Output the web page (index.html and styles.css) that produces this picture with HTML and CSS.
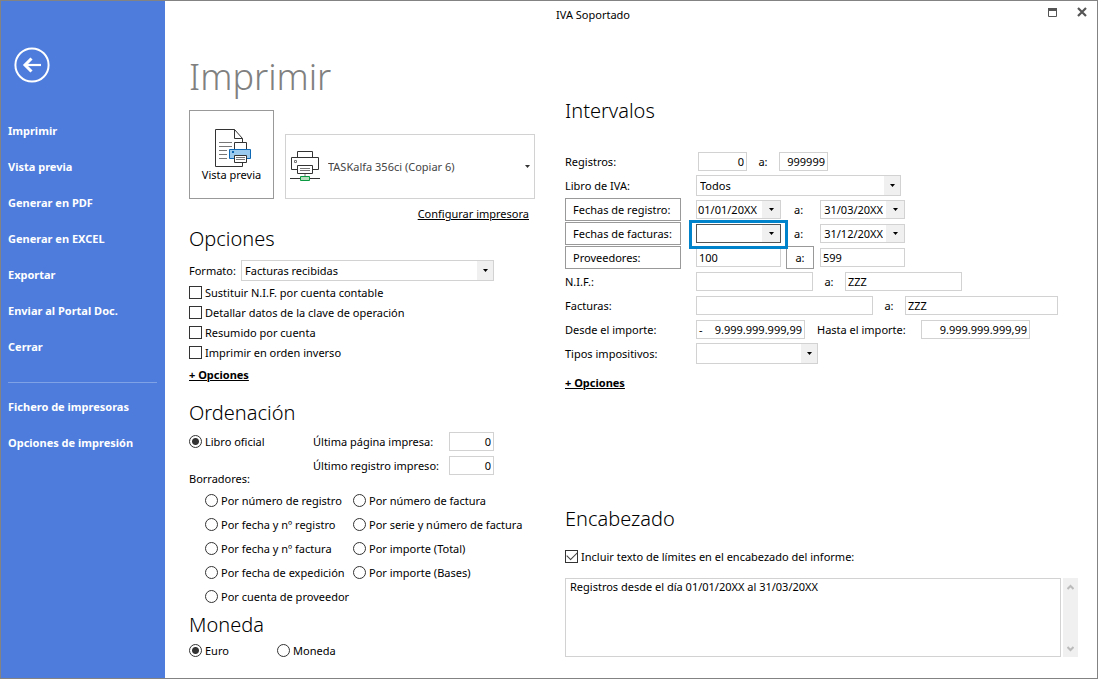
FILE: index.html
```html
<!DOCTYPE html>
<html lang="es">
<head>
<meta charset="utf-8">
<title>IVA Soportado</title>
<link rel="stylesheet" href="styles.css">
</head>
<body>
<div class="window">
  <nav class="sidebar">
    <button class="back" type="button" aria-label="Volver">
      <svg width="36" height="36" viewBox="0 0 36 36" fill="none" stroke="#fff"><circle cx="18" cy="18" r="16.6" stroke-width="2"/><path d="M27 18H11" stroke-width="2.2"/><path d="M17.5 11.5 11 18l6.500 6.500" stroke-width="3"/></svg>
    </button>
    <ul class="menu">
      <li><a href="#">Imprimir</a></li>
      <li><a href="#">Vista previa</a></li>
      <li><a href="#">Generar en PDF</a></li>
      <li><a href="#">Generar en EXCEL</a></li>
      <li><a href="#">Exportar</a></li>
      <li><a href="#">Enviar al Portal Doc.</a></li>
      <li><a href="#">Cerrar</a></li>
    </ul>
    <ul class="menu menu-extra">
      <li><a href="#">Fichero de impresoras</a></li>
      <li><a href="#">Opciones de impresión</a></li>
    </ul>
  </nav>

  <main class="main">
    <header class="titlebar">
      <span class="title">IVA Soportado</span>
      <div class="window-buttons">
        <button type="button" aria-label="Maximizar"><svg width="9" height="9" viewBox="0 0 9 9"><path d="M.5.5h8v8h-8z" fill="none" stroke="#555"/><path d="M0 0h9v3H0z" fill="#555"/></svg></button>
        <button type="button" aria-label="Cerrar"><svg width="10" height="10" viewBox="0 0 10 10"><path d="M1 1l8 8M9 1L1 9" stroke="#555" stroke-width="2.200"/></svg></button>
      </div>
    </header>

    <form class="columns">
      <div class="left">
        <h1>Imprimir</h1>
        <div class="printer-row">
          <button class="tile" type="button">
            <svg width="36" height="38" viewBox="0 0 36 38" fill="none">
              <path d="M.5.5h19l8 9v28H.500z" fill="#fff" stroke="#333"/><path d="M19.500.500v9h8" stroke="#333"/>
              <path d="M4 13.500h13M4 17.500h13M4 21.500h8M4 25.500h8M4 29.500h8" stroke="#777"/>
              <path d="M19.500 13.500h12v8h-12z" fill="#fff" stroke="#333"/>
              <path d="M14.500 20.500h21v9h-21z" fill="#9ccbf0" stroke="#0f68b4"/>
              <path d="M17 22h2v2h-2z" fill="#0f68b4"/>
              <path d="M19.500 26.500h12v7h-12z" fill="#fff" stroke="#333"/><path d="M21 28.500h9M21 30.500h9" stroke="#777"/>
            </svg>
            <span>Vista previa</span>
          </button>
          <div class="printer">
            <svg class="printer-icon" width="30" height="31" viewBox="0 0 30 31" fill="none">
              <path d="M7.500 6V.5h15V6M7.500 18.500h-6v-12h27v12h-6" stroke="#333"/>
              <path d="M4.500 9.500h2v2h-2z" stroke="#777"/>
              <path d="M7.500 14.500h15v8h-15z" stroke="#333"/><path d="M10 17.500h10M10 19.500h10" stroke="#777"/>
              <path d="M15 23v2" stroke="#777"/><path d="M0 27.500h30" stroke="#333"/>
              <path d="M10.500 25.500h9v4h-9z" fill="#b6dfbd" stroke="#0b9a41"/>
            </svg>
            <select class="printer-select" aria-label="Impresora"><option>TASKalfa 356ci (Copiar 6)</option></select>
            <svg class="printer-arrow" width="5" height="3" viewBox="0 0 5 3"><path d="M0 0h5L2.500 3z" fill="#333"/></svg>
          </div>
        </div>
        <p class="configure"><a href="#">Configurar impresora</a></p>

        <h2>Opciones</h2>
        <div class="format">
          <label for="formato">Formato:</label>
          <div class="select">
            <select id="formato"><option>Facturas recibidas</option></select>
            <span class="arrow"><svg width="5" height="3" viewBox="0 0 5 3"><path d="M0 0h5L2.500 3z"/></svg></span>
          </div>
        </div>
        <div class="checks">
          <label class="choice"><input type="checkbox">Sustituir N.I.F. por cuenta contable</label>
          <label class="choice"><input type="checkbox">Detallar datos de la clave de operación</label>
          <label class="choice"><input type="checkbox">Resumido por cuenta</label>
          <label class="choice"><input type="checkbox">Imprimir en orden inverso</label>
        </div>
        <a class="more" href="#">+ Opciones</a>

        <h2 class="order-title">Ordenación</h2>
        <div class="order-top">
          <div class="official">
            <label class="choice"><input type="radio" name="orden" checked>Libro oficial</label>
            <p>Borradores:</p>
          </div>
          <div class="counters">
            <label for="pagina">Última página impresa:</label><input class="box num" id="pagina" value="0">
            <label for="registro">Último registro impreso:</label><input class="box num" id="registro" value="0">
          </div>
        </div>
        <div class="drafts">
          <label class="choice"><input type="radio" name="orden">Por número de registro</label>
          <label class="choice"><input type="radio" name="orden">Por número de factura</label>
          <label class="choice"><input type="radio" name="orden">Por fecha y nº registro</label>
          <label class="choice"><input type="radio" name="orden">Por serie y número de factura</label>
          <label class="choice"><input type="radio" name="orden">Por fecha y nº factura</label>
          <label class="choice"><input type="radio" name="orden">Por importe (Total)</label>
          <label class="choice"><input type="radio" name="orden">Por fecha de expedición</label>
          <label class="choice"><input type="radio" name="orden">Por importe (Bases)</label>
          <label class="choice"><input type="radio" name="orden">Por cuenta de proveedor</label>
        </div>

        <h2 class="currency-title">Moneda</h2>
        <div class="currency">
          <label class="choice"><input type="radio" name="moneda" checked>Euro</label>
          <label class="choice"><input type="radio" name="moneda">Moneda</label>
        </div>
      </div>

      <div class="right">
        <h2>Intervalos</h2>
        <div class="ranges">
          <div class="row">
            <label for="reg1">Registros:</label>
            <div class="fields inset"><input class="box w-count num" id="reg1" value="0"><label class="sep" for="reg2">a:</label><input class="box w-count num" id="reg2" value="999999"></div>
          </div>
          <div class="row">
            <label for="libro">Libro de IVA:</label>
            <div class="fields"><div class="select w-book">
              <select id="libro"><option>Todos</option></select>
              <span class="arrow"><svg width="5" height="3" viewBox="0 0 5 3"><path d="M0 0h5L2.500 3z"/></svg></span>
            </div></div>
          </div>
          <div class="row">
            <button class="range-button" type="button">Fechas de registro:</button>
            <div class="fields">
              <div class="date"><input aria-label="Fecha de registro inicial" value="01/01/20XX"><button class="arrow" type="button" aria-label="Abrir calendario"><svg width="5" height="3" viewBox="0 0 5 3"><path d="M0 0h5L2.500 3z"/></svg></button></div>
              <label class="sep wide" for="fr2">a:</label>
              <div class="date end"><input id="fr2" value="31/03/20XX"><button class="arrow" type="button" aria-label="Abrir calendario"><svg width="5" height="3" viewBox="0 0 5 3"><path d="M0 0h5L2.500 3z"/></svg></button></div>
            </div>
          </div>
          <div class="row">
            <button class="range-button" type="button">Fechas de facturas:</button>
            <div class="fields">
              <div class="date active"><input aria-label="Fecha de factura inicial"><button class="arrow" type="button" aria-label="Abrir calendario"><svg width="5" height="3" viewBox="0 0 5 3"><path d="M0 0h5L2.500 3z"/></svg></button></div>
              <label class="sep wide" for="ff2">a:</label>
              <div class="date end"><input id="ff2" value="31/12/20XX"><button class="arrow" type="button" aria-label="Abrir calendario"><svg width="5" height="3" viewBox="0 0 5 3"><path d="M0 0h5L2.500 3z"/></svg></button></div>
            </div>
          </div>
          <div class="row">
            <button class="range-button" type="button">Proveedores:</button>
            <div class="fields"><input class="box w-date" aria-label="Proveedor inicial" value="100"><span class="sep wide with-button"><button class="to-button" type="button">a:</button></span><input class="box w-date" aria-label="Proveedor final" value="599"></div>
          </div>
          <div class="row">
            <label for="nif1">N.I.F.:</label>
            <div class="fields"><input class="box w-nif" id="nif1"><label class="sep" for="nif2">a:</label><input class="box w-nif" id="nif2" value="ZZZ"></div>
          </div>
          <div class="row">
            <label for="fac1">Facturas:</label>
            <div class="fields"><input class="box w-invoice" id="fac1"><label class="sep" for="fac2">a:</label><input class="box w-invoice-end" id="fac2" value="ZZZ"></div>
          </div>
          <div class="row">
            <label for="imp1">Desde el importe:</label>
            <div class="fields"><span class="box w-amount signed"><span>-</span><input class="num" id="imp1" value="9.999.999.999,99"></span><label class="until" for="imp2">Hasta el importe:</label><input class="box w-amount num" id="imp2" value="9.999.999.999,99"></div>
          </div>
          <div class="row">
            <label for="tipos">Tipos impositivos:</label>
            <div class="fields"><div class="select w-types">
              <select id="tipos"><option></option></select>
              <span class="arrow"><svg width="5" height="3" viewBox="0 0 5 3"><path d="M0 0h5L2.500 3z"/></svg></span>
            </div></div>
          </div>
        </div>
        <a class="more" href="#">+ Opciones</a>

        <h2 class="heading-title">Encabezado</h2>
        <label class="choice include"><input type="checkbox" checked>Incluir texto de límites en el encabezado del informe:</label>
        <div class="note">
          <textarea aria-label="Texto del encabezado">Registros desde el día 01/01/20XX al 31/03/20XX</textarea>
          <div class="scroll">
            <svg width="7" height="6" viewBox="0 0 7 6" fill="none" stroke="#bbb" stroke-width="2"><path d="M.5 5l3-3 3 3"/></svg>
            <svg width="7" height="6" viewBox="0 0 7 6" fill="none" stroke="#bbb" stroke-width="2"><path d="M.5 1l3 3 3-3"/></svg>
          </div>
        </div>
      </div>
    </form>
  </main>
</div>
</body>
</html>
```
FILE: styles.css
```css
* { box-sizing: border-box; }
body, h1, h2, p, ul { margin: 0; padding: 0; }
body, input, select, button, textarea {
  font-family: "Noto Sans", "Open Sans", sans-serif;
  font-size: 11px;
  color: #000;
}
button, input, select, textarea { margin: 0; padding: 0; border: 0; background: none; border-radius: 0; }
svg { display: block; }
a { color: inherit; }
input, select, textarea { outline: 0; min-width: 0; }

.window { display: flex; min-height: 100vh; border: 1px solid #838383; background: #fff; }

.sidebar { flex: 0 0 164px; padding: 46px 8px 20px 7px; background: #4d7cdc; }
.back { display: block; margin-left: 6px; margin-bottom: 30px; }
.menu { list-style: none; font-weight: 700; }
.menu a { display: block; line-height: 36px; color: #fff; text-decoration: none; }
.menu-extra { margin-top: 17px; padding-top: 6px; border-top: 1px solid #7fa1e6; }

.main { flex: 1; min-width: 0; }
.titlebar { display: grid; grid-template-columns: 1fr auto 1fr; align-items: center; height: 30px; padding-right: 10px; }
.title { grid-column: 2; margin-right: 66px; line-height: 28px; align-self: start; }
.window-buttons { display: flex; align-items: center; justify-content: flex-end; gap: 20px; height: 22px; align-self: start; }

.columns { display: grid; grid-template-columns: minmax(346px, 346fr) minmax(500px, 513fr); column-gap: 30px; padding: 22px 19px 0 24px; }
h1, h2 { font-weight: 300; }
h1 { font-size: 36px; line-height: 48px; color: #808080; }
h2 { font-size: 20px; line-height: 32px; }

.printer-row { display: flex; align-items: flex-end; gap: 11px; margin-top: 9px; }
.tile { flex: 0 0 85px; height: 89px; padding-top: 2px; display: flex; flex-direction: column; align-items: center; justify-content: center; border: 1px solid #999; line-height: 15px; }
.tile svg { margin-left: 2px; }
.printer { flex: 1; display: grid; grid-template-columns: 42px 1fr 9px; align-items: center; height: 65px; border: 1px solid #d2d2d2; }
.printer > * { grid-row: 1; }
.printer-icon { grid-column: 1; margin-left: 4px; }
.printer-select { grid-column: 2 / 4; appearance: none; height: 63px; color: #444; }
.printer-arrow { grid-column: 3; pointer-events: none; }
.configure { padding: 6px 6px 0 0; line-height: 18px; text-align: right; }

.format { display: flex; align-items: center; margin-top: 5px; }
.format label { flex: 0 0 52px; }
.format .select { flex: 0 1 253px; }
.select { display: grid; grid-template-columns: 1fr 16px; height: 21px; border: 1px solid #d2d2d2; }
.select > * { grid-row: 1; }
.select select { grid-column: 1 / 3; appearance: none; padding-left: 3px; width: 100%; }
.arrow { display: flex; align-items: center; justify-content: center; background: #f0f0f0; }
.select .arrow { grid-column: 2; pointer-events: none; }

.checks { margin-top: 1px; padding-bottom: 1px; }
.choice { display: flex; align-items: center; gap: 3px; height: 20px; white-space: nowrap; }
.choice input { appearance: none; flex: 0 0 13px; height: 13px; border: 1px solid #333; background: #fff; }
.choice input[type="radio"] { border-radius: 50%; }
.choice input[type="radio"]:checked { background: radial-gradient(circle, #333 3px, #fff 4px); }
.choice input[type="checkbox"]:checked { display: grid; place-items: center; }
.choice input[type="checkbox"]:checked::before { content: ""; width: 9px; height: 5px; border: solid #444; border-width: 0 0 1px 1px; transform: rotate(-45deg) translate(1px, -1px); }
.more { display: block; width: max-content; margin-top: 2px; line-height: 20px; font-weight: 700; }

.order-title { margin-top: 12px; }
.order-top { display: grid; grid-template-columns: 124px 1fr; height: 59px; }
.official { display: flex; flex-direction: column; justify-content: space-between; }
.official p { line-height: 18px; }
.official .choice, .drafts .choice { height: 24px; }
.counters { display: grid; grid-template-columns: 136px 45px; grid-auto-rows: 24px; align-items: center; align-content: start; white-space: nowrap; }
.drafts { display: grid; grid-template-columns: 148px 1fr; padding-left: 16px; }
.currency-title { margin-top: 1px; }
.currency { display: grid; grid-template-columns: 88px 1fr; }
.currency .choice { height: 18px; }

.box { height: 19px; padding: 0 2px; border: 1px solid #d2d2d2; }
.num { text-align: right; }
.right { padding-top: 42px; }
.ranges { margin-top: 22px; }
.row { display: grid; grid-template-columns: 116px 1fr; column-gap: 15px; align-items: center; height: 24px; white-space: nowrap; }
.fields { display: flex; align-items: center; height: 22px; }
.inset { padding-left: 2px; }
.sep { flex: 0 0 32px; text-align: center; }
.wide { flex-basis: 39px; padding-left: 13px; text-align: left; }
.with-button { padding-left: 5px; }
.range-button { height: 23px; padding-left: 7px; border: 1px solid #999; text-align: left; }
.to-button { width: 28px; height: 23px; border: 1px solid #999; }
.date { position: relative; display: flex; width: 85px; height: 19px; border: 1px solid #d2d2d2; }
.date input { flex: 1; padding-left: 1px; }
.date.end input { text-align: right; padding-right: 3px; }
.date .arrow { flex: 0 0 18px; }
.active { border-color: #555; }
.active::after { content: ""; position: absolute; inset: -5px -8px -7px; border: 3px solid #0083ca; pointer-events: none; }
.w-count { width: 49px; }
.w-book { width: 205px; }
.w-date { width: 85px; }
.w-nif { width: 117px; }
.w-invoice { width: 177px; }
.w-invoice-end { width: 153px; }
.w-amount { width: 109px; }
.w-types { width: 122px; }
.signed { display: flex; align-items: center; }
.signed input { flex: 1; }
.until { flex: 0 0 116px; padding-left: 12px; }
.right .more { margin-top: 8px; }
.heading-title { margin-top: 110px; }
.include { margin-top: 11px; }
.note { display: flex; gap: 2px; height: 79px; margin-top: 12px; }
.note textarea { flex: 1; padding: 0 4px; border: 1px solid #d2d2d2; resize: none; line-height: 15px; overflow: hidden; }
.scroll { flex: 0 0 15px; display: flex; flex-direction: column; align-items: center; justify-content: space-between; padding: 6px 0 5px; background: #f0f0f0; }
```
